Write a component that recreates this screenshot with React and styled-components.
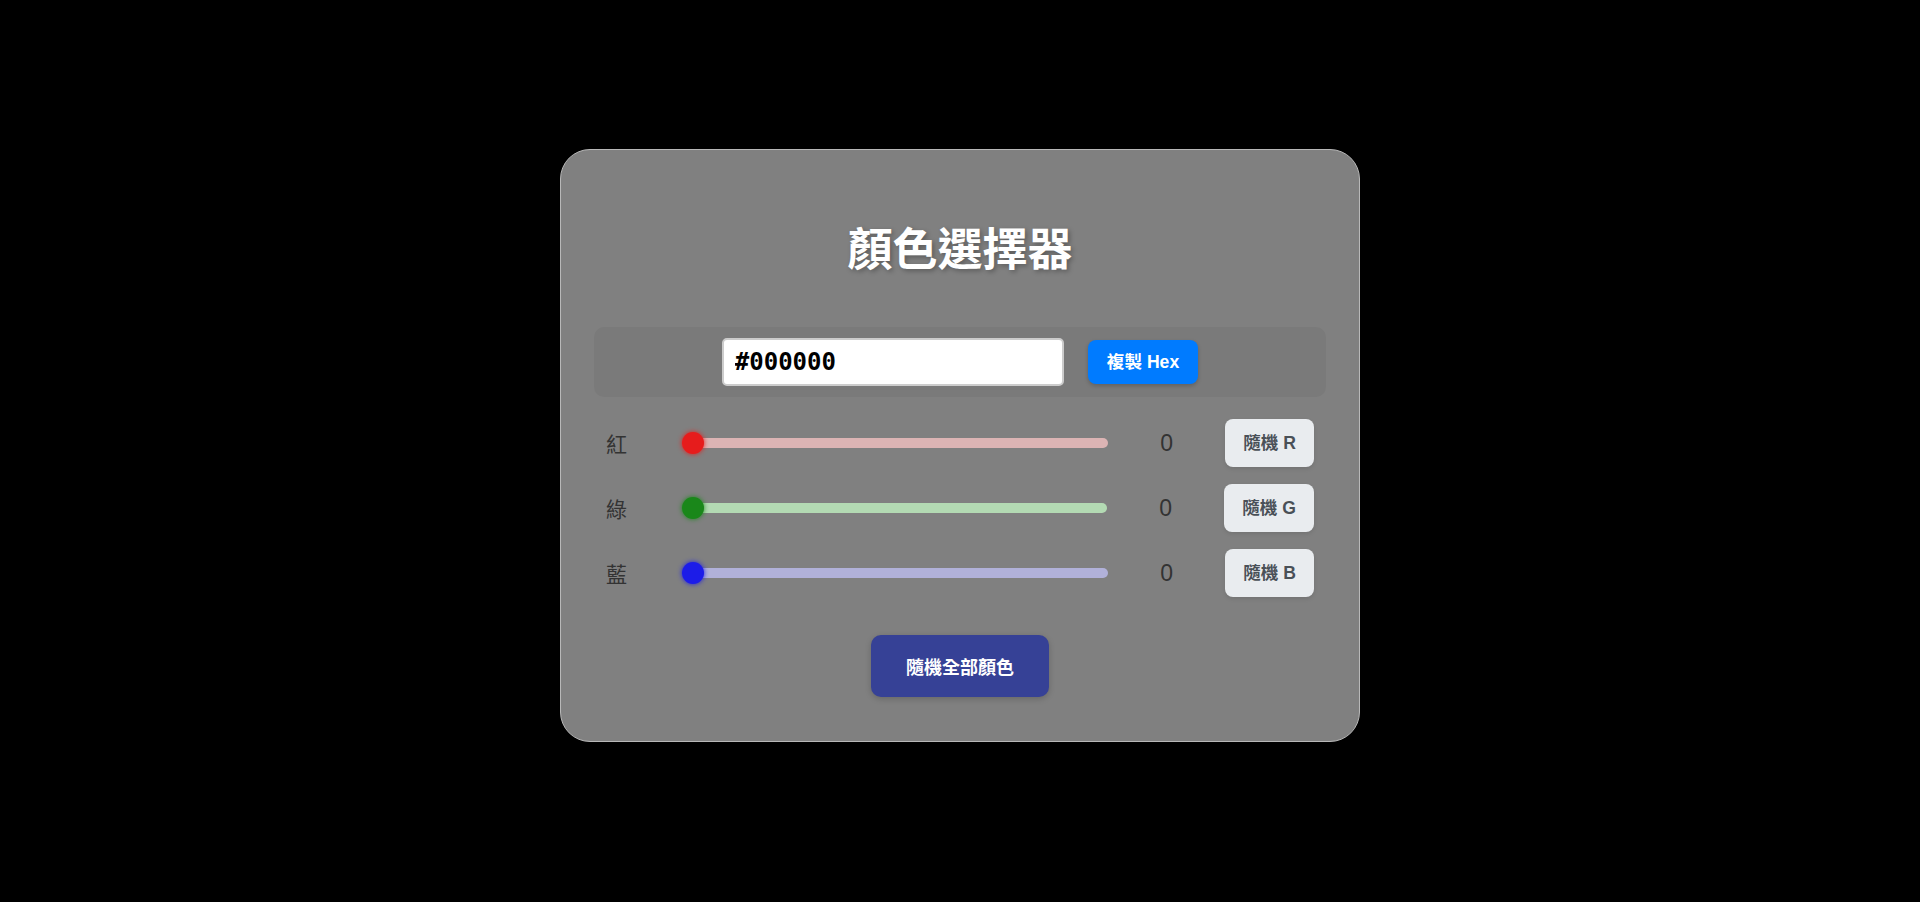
import React, { useState } from "react";
import styled, { createGlobalStyle } from "styled-components";

const GlobalStyle = createGlobalStyle`
  * { box-sizing: border-box; }
  html, body { margin: 0; padding: 0; background: #000; }
  body {
    font-family: "Liberation Sans", "Noto Sans CJK TC", sans-serif;
    min-height: 902px;
  }
`;

const Page = styled.div`
  display: flex;
  justify-content: center;
  align-items: flex-start;
  padding-top: 149px;
  min-height: 902px;
  background: #000;
`;

const Card = styled.div`
  width: 800px;
  background: #808080;
  border: 1px solid #b8b8b8;
  border-radius: 30px;
  padding: 33px 33px 44px;
  display: flex;
  flex-direction: column;
`;

const Title = styled.h1`
  margin: 36px 0 44px;
  font-family: "Liberation Sans", "Noto Sans CJK TC", sans-serif;
  font-size: 45px;
  line-height: 64px;
  font-weight: 700;
  color: #fff;
  text-align: center;
  text-shadow: 2px 2px 5px rgba(0, 0, 0, 0.3);
`;

const HexBar = styled.div`
  display: flex;
  justify-content: center;
  align-items: center;
  gap: 24px;
  padding: 11px;
  background: #7a7a7a;
  border-radius: 10px;
  margin-bottom: 22px;
`;

const HexInput = styled.input`
  width: 342px;
  height: 48px;
  border: 2px solid #cccccc;
  border-radius: 5px;
  background: #fff;
  padding: 0 11px;
  font-family: "DejaVu Sans Mono", "Liberation Mono", monospace;
  font-size: 24px;
  font-weight: 700;
  color: #000;
  outline: none;
`;

const CopyButton = styled.button`
  border: none;
  border-radius: 8px;
  background: #007bff;
  color: #fff;
  font-family: "Liberation Sans", "Noto Sans CJK TC", sans-serif;
  font-size: 17.6px;
  font-weight: 700;
  line-height: 24px;
  padding: 10px 19px;
  box-shadow: 0 2px 4px rgba(0, 0, 0, 0.2);
  cursor: pointer;
`;

const Rows = styled.div`
  display: flex;
  flex-direction: column;
  gap: 17px;
`;

const Row = styled.div`
  display: grid;
  grid-template-columns: 60px 1fr 85px auto;
  align-items: center;
  gap: 16px;
  padding: 0 12px;
  height: 48px;
`;

const Label = styled.span`
  font-family: "Noto Sans CJK TC", sans-serif;
  font-size: 21px;
  color: #333;
`;

const Slider = styled.input`
  -webkit-appearance: none;
  appearance: none;
  width: 100%;
  height: 22px;
  margin: 0;
  background: transparent;
  outline: none;

  &::-webkit-slider-runnable-track {
    height: 10px;
    border-radius: 5px;
    background: ${(p) => p.$track};
  }
  &::-webkit-slider-thumb {
    -webkit-appearance: none;
    appearance: none;
    width: 22px;
    height: 22px;
    margin-top: -6px;
    border-radius: 50%;
    background: ${(p) => p.$thumb};
    box-shadow: 0 0 5px ${(p) => p.$thumb};
    border: none;
    cursor: pointer;
  }
`;

const Value = styled.span`
  text-align: center;
  font-size: 23px;
  color: #333;
  font-family: "Liberation Sans", sans-serif;
`;

const RandomButton = styled.button`
  justify-self: end;
  border: none;
  border-radius: 8px;
  background: #e9ecef;
  color: #495057;
  font-family: "Liberation Sans", "Noto Sans CJK TC", sans-serif;
  font-size: 17.6px;
  font-weight: 700;
  line-height: 24px;
  padding: 12px 18px;
  box-shadow: 0 2px 4px rgba(0, 0, 0, 0.1);
  cursor: pointer;
`;

const Footer = styled.div`
  display: flex;
  justify-content: center;
  margin-top: 38px;
`;

const AllButton = styled.button`
  border: none;
  border-radius: 10px;
  background: #364196;
  color: #fff;
  font-family: "Noto Sans CJK TC", sans-serif;
  font-size: 18px;
  font-weight: 700;
  line-height: 26px;
  padding: 18px 35px;
  box-shadow: 0 2px 6px rgba(0, 0, 0, 0.2);
  cursor: pointer;
`;

const channels = [
  { key: "r", label: "紅", letter: "R", thumb: "#e61c1c", track: "#dcb4b4" },
  { key: "g", label: "綠", letter: "G", thumb: "#1a871a", track: "#b3dab3" },
  { key: "b", label: "藍", letter: "B", thumb: "#1c1ce8", track: "#b1b1d9" },
];

const toHex = (v) => v.toString(16).padStart(2, "0").toUpperCase();
const rnd = () => Math.floor(Math.random() * 256);

export default function App() {
  const [rgb, setRgb] = useState({ r: 0, g: 0, b: 0 });
  const hex = `#${toHex(rgb.r)}${toHex(rgb.g)}${toHex(rgb.b)}`;

  return (
    <>
      <GlobalStyle />
      <Page>
        <Card>
          <Title>顏色選擇器</Title>
          <HexBar>
            <HexInput value={hex} readOnly />
            <CopyButton>複製 Hex</CopyButton>
          </HexBar>
          <Rows>
            {channels.map((c) => (
              <Row key={c.key}>
                <Label>{c.label}</Label>
                <Slider
                  type="range"
                  min="0"
                  max="255"
                  value={rgb[c.key]}
                  $thumb={c.thumb}
                  $track={c.track}
                  onChange={(e) =>
                    setRgb({ ...rgb, [c.key]: Number(e.target.value) })
                  }
                />
                <Value>{rgb[c.key]}</Value>
                <RandomButton
                  onClick={() => setRgb({ ...rgb, [c.key]: rnd() })}
                >
                  隨機 {c.letter}
                </RandomButton>
              </Row>
            ))}
          </Rows>
          <Footer>
            <AllButton onClick={() => setRgb({ r: rnd(), g: rnd(), b: rnd() })}>
              隨機全部顏色
            </AllButton>
          </Footer>
        </Card>
      </Page>
    </>
  );
}
